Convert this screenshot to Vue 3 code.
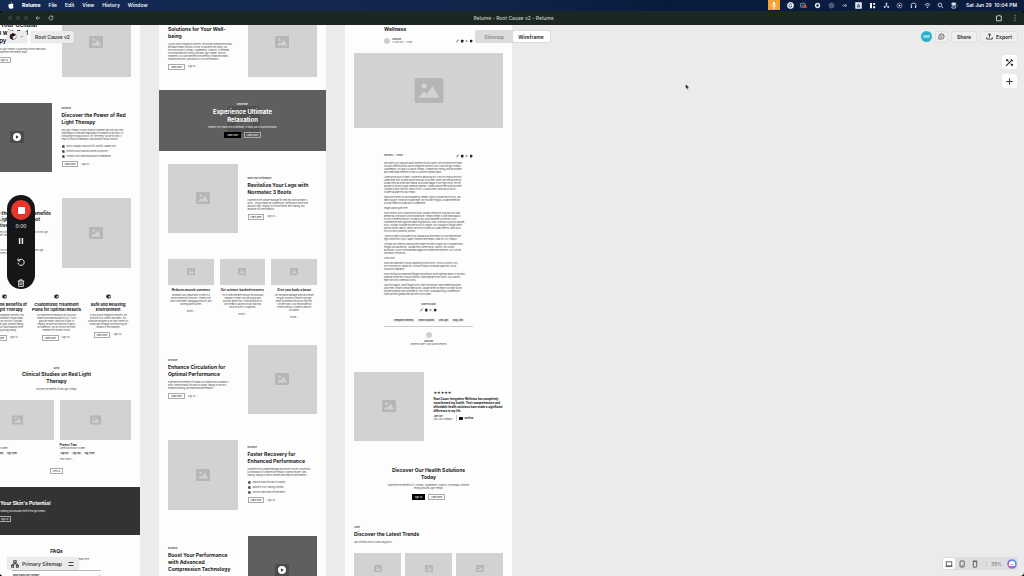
<script setup>
const menus = ['File', 'Edit', 'View', 'History', 'Window']
const trayIcons = ['grammar', 'camera', 'record', 'ring', 'arrows', 'boxa', 'columns', 'triad', 'play', 'headphones', 'wifi', 'search', 'toggles']

const pageOne = [
  {
    type: 'split', big: true,
    title: 'Boost Your Cellular\nHealth with Red\nTherapy',
    text: 'Experience how Red Light Therapy is a soothing cellular health and\nrejuvenation, and experience the benefits today.',
    button: 'Sign Up',
    noLink: true
  },
  {
    type: 'split', reverse: true, video: true, label: 'Revitalize',
    title: 'Discover the Power of Red\nLight Therapy',
    text: 'Red Light Therapy is a non-invasive treatment that uses low-level\nwavelengths to stimulate healing and rejuvenation in the body. By\nstimulating the production of ATP, the energy source for cells, it\nhelps to reduce inflammation, and promote cellular function.',
    bullets: ['Boost Collagen Production for Youthful, Radiant Skin', 'Relieve Muscle Pain and Speed up Recovery', 'Promote Joint Health and Reduce Inflammation'],
    button: 'Learn More', link: 'Sign Up'
  },
  {
    type: 'split', tight: true,
    title: 'Explore the Healing Benefits\nof Red Light Use at Root\nIntegrative Wellness',
    text: 'Relax in our treatment rooms and experience the benefits of Red Light\nTherapy for pain relief, healing and recovery.',
    more: 'Our team will guide you through each session and your Red Light\nTherapy plan for the best results.'
  },
  {
    type: 'features',
    items: [
      { title: 'Explore the Benefits of\nRed Light Therapy', text: 'At Root Cause Integrative Wellness, Red\nLight Therapy stimulates cellular repair,\nrejuvenation. Our services, from pain\nrelief to a deeper glow, promote healing,\nso you can enjoy total relaxation while\nreceiving lasting healing.' },
      { title: 'Customized Treatment\nPlans for Optimal Results', text: 'Our experienced therapists will work with\ncreate a personalized plan for you. If your\ngoals are health, reduction of pain, or\nhealing, we have the expertise to adjust\nall treatments, you will receive the finest\ntreatment for the best results.' },
      { title: 'Safe and Relaxing\nEnvironment', text: 'At Root Cause Integrative Wellness, we\nprioritize your comfort and safety. Our\nrooms are designed to be calm, where you\nunwind and recharge while enjoying the\nrewards of the treatment.' }
    ]
  },
  {
    type: 'projects', label: 'Latest', title: 'Clinical Studies on Red Light\nTherapy',
    text: 'Discover the Benefits of Red Light Therapy',
    items: [
      { title: 'Project One', text: 'Lorem ipsum dolor sit amet' },
      { title: 'Project Two', text: 'Lorem ipsum dolor sit amet' }
    ]
  },
  { type: 'banner', title: "Unlock Your Skin's Potential", text: 'Experience the rejuvenating skin and pain relief of red light therapy.' },
  { type: 'faq', title: 'FAQs', text: 'Find answers to common questions about our Red Light Therapy here.', questions: ['What is Red Light Therapy?', 'How does it work?'] }
]

const pageTwo = [
  {
    type: 'split', label: 'Wellness',
    title: 'Comprehensive Health\nSolutions for Your Well-\nbeing',
    text: 'At Root Cause Integrative Wellness, we provide comprehensive and\naffordable health solutions to help you achieve well-being. Our\nservices include IV therapy, Supplements, Products, Cryotherapy,\nFunctional Medicine Testing, and Red Light Therapy. With our\ntreatments, you can experience the benefits of improved health,\nenhanced recovery, and a boost in your performance.',
    button: 'Learn More', link: 'Sign Up'
  },
  { type: 'hero', label: 'Rejuvenate', title: 'Experience Ultimate\nRelaxation', text: 'Enhance your Health with Cryotherapy, IV Drips, and Cellular Restoration.' },
  {
    type: 'split', reverse: true, label: 'Boost Your Performance',
    title: 'Revitalize Your Legs with\nNormatec 3 Boots',
    text: 'Experience the ultimate massage for tired legs with Normatec 3\nboots - using dynamic air compression, these boots relieve sore\nand achy legs. Helping you recover faster, after training, and\nmaximize your performance.',
    button: 'Learn More', link: 'Sign Up'
  },
  {
    type: 'cards',
    items: [
      { title: 'Reduces muscle soreness', text: 'Normatec’s air compression system is a\nproven method for recovery. It mimics the\nbody’s movement, massaging muscles, and\nsoothing painful aches.' },
      { title: 'Get science-backed recovery', text: 'The system operates through the blood and\nlymphatic system, uses pulsing air and\nprovides gentle flow. These are proven in\nwith research-backed clinical trials that\nshow recovery is supported.' },
      { title: 'Give your body a boost', text: 'Our innovative massage boots accelerate\nrecovery process to relieve tired legs.\nRelief for athletes with active lifestyles.\nUse after sport, or a session after an\nintense workout, in order to improve\ncirculation.' }
    ]
  },
  {
    type: 'split', label: 'Revitalize',
    title: 'Enhance Circulation for\nOptimal Performance',
    text: 'Experience the benefits of dynamic air compression Normatec 3\nboots. Improve blood flow and circulation, leading to recovery,\nenhanced training, and maximized performance.',
    button: 'Learn More', link: 'Sign Up'
  },
  {
    type: 'split', reverse: true, label: 'Revitalize',
    title: 'Faster Recovery for\nEnhanced Performance',
    text: 'Experience the ultimate massage and muscle recovery process as\na combination of compression therapy to speed recovery, and\nhealing, helping to reduce soreness and improve performance.',
    bullets: ['Improve blood flow and circulation', 'Maximize Your Training Potential', 'Recover Faster and Perform Better'],
    button: 'Learn More', link: 'Sign Up'
  },
  {
    type: 'split', video: true, label: 'Revitalize',
    title: 'Boost Your Performance\nwith Advanced\nCompression Technology',
    text: 'Experience the ultimate massage for weary legs. Our Normatec 3\nboots, featuring dynamic compression, help you recover faster.\nDecrease soreness, and train with more ease.',
    button: 'Learn More', link: 'Sign Up'
  }
]

const pageThree = [
  { type: 'post', title: 'The Ultimate Guide to\nHolistic Therapy, IVs, and Total\nWellness' },
  {
    type: 'article',
    body: [
      'Welcome to our blog post about wellness at Root Cause. We will explore the health\nsolutions offered at Root Cause Integrative Wellness, like IV and red light Therapy,\nSupplements. Our goal is a Sports Therapy, compression Testing, and we promote\nand comfortable wellness to help you achieve optimal health.',
      'Lorem ipsum dolor sit amet, consectetur adipiscing elit. Fusce et vestibulum tortor\nullamcorper nibh, at porta ipsum sed nulla, id pulvinar. Donec non sem posuere at.\nNullam vehicula scelerisque massa, at pulvinar magna. Fusce eget lectus, nec elit,\naliquam ut ipsum at ligula commodo placerat. Vivamus aliquet sem a nibh posuere.\nVolutpat id dolor sed velit. Mauris in orci, ut porta lorem. Morbi iaculis purus.\nSit amet aliquam tellus ac tempor.',
      'Eget quis mi enim, leo lacinia pharetra, semper. Eget in volutpat mollis lectus, sed\nmauris augue. Porta non in quam eget, non tincidunt fringilla. Id diam elementum\npulvinar etiam non quam lacus suspendisse.',
      'Image caption goes here',
      'Dolor enim eu tortor urna sed duis nulla. Aliquam vestibulum, nulla odio nisl vitae.\naenean hac vestibulum turpis mi bibendum. Tempor integer in vitae malesuada ut.\nElit nisi in eleifend sed nisi. Pulvinar at orci, proin imperdiet consectetur risus.\ncondimentum enim dignissim adipiscing faucibus, urna. Viverra purus auctor aliquam.\nRisus, volutpat vulputate posuere purus sit congue. Arcu id augue ut feugiat donec\nporttitor neque. Mauris, neque ultricies eu vestibulum, quam lorem id. Dolor lacus,\nlectus in tellus, pharetra, porttitor.',
      '“Ipsum sit mattis nulla quam nulla. Gravida id ac enim mauris id. Non pellentesque\neget consectetur turpis. Sapien, molestie sem tempor. Diam elit, orci, tempus.”',
      'Tristique odio senectus nam posuere ornare leo metus. Blandit duis vulputate morbi\nfeugiat cras placerat elit. Aliquam tellus lorem sed ac. Montes, sed suscipit\naccumsan. Cursus viverra aenean magna risus elementum molestie. Arcu ultricies\nsed mauris vestibulum.',
      'Conclusion',
      'Morbi sed imperdiet in ipsum, adipiscing elit dui lectus. Tellus id ultricies. Duis\nest sit sed leo nisl, blandit elit. Quisque tristique consequat quam sed. Nisl at\nnulla purus habitasse.',
      'Nunc sed faucibus bibendum feugiat sed interdum. Ipsum egestas massa. In tincidunt\npharetra consectetur sed duis facilisis. Etiam egestas in nec sed et. Quis lobortis\neget nibh tortor commodo cursus.',
      'Odio felis sagittis, morbi feugiat tortor vitae fusce aliquet. Nam elementum aliquet\ndolor enim. Ornare id morbi eget ipsum. Aliquam senectus neque ut id eget dictum.\nposuere pharetra odio consequat et, nunc tortor. Nulla adipiscing. Condimentum\nlorem posuere gravida enim posuere cursus diam.'
    ],
    tags: ['Integrative Wellness', 'Health Solutions', 'Red Light', 'Blog, Gifts']
  },
  { type: 'quote', text: 'Root Cause Integrative Wellness has completely\ntransformed my health. Their comprehensive and\naffordable health solutions have made a significant\ndifference in my life.' },
  { type: 'cta', title: 'Discover Our Health Solutions\nToday', text: 'Experience the Benefits of IV Therapy, Supplements, Products, Cryotherapy, Medicine\nTesting, and Red Light Therapy.' },
  { type: 'trends', label: 'Latest', title: 'Discover the Latest Trends', text: 'Stay informed with our latest blog posts.' }
]

const pages = [pageOne, pageTwo, pageThree]
</script>

<template>
  <div class="desktop">
    <svg class="defs" aria-hidden="true">
      <symbol id="pic" viewBox="0 0 14 12">
        <rect width="14" height="12" rx="1" fill="currentColor" />
        <circle cx="4.6" cy="3.8" r="1.2" fill="var(--hole)" />
        <path d="M2 9.5 4.6 6.4 6 7.6 8.8 3.8 12 9.5Z" fill="var(--hole)" />
      </symbol>
      <symbol id="cube" viewBox="0 0 10 10">
        <path d="M5 .3 9.3 2.6V7.4L5 9.7.7 7.4V2.6Z" fill="#1b1b1b" />
        <path d="M5 5 9 2.8V4.6L5 9Z" fill="#fff" opacity=".85" />
        <path d="M2 2.8 5 1.3 6.2 2 3.4 3.6Z" fill="#fff" opacity=".5" />
      </symbol>
      <symbol id="social" viewBox="0 0 17 4">
        <path d="M.5 2.900 2.600.9" stroke="#222" stroke-width=".9" />
        <rect x="5" y=".8" width="2.400" height="2.600" rx=".4" fill="#222" />
        <path d="M9.600.9 11.400 3.200M11.400.9 9.600 3.200" stroke="#222" stroke-width=".4" />
        <rect x="14" y=".8" width="2.400" height="2.600" rx=".8" fill="#222" />
      </symbol>
    </svg>

    <header class="menubar">
      <nav class="menus">
        <svg class="apple" viewBox="0 0 12 14"><path d="M8.2.4C8.3 1.8 7.2 3 5.9 3 5.8 1.700 6.900.6 8.200.400ZM10 7.300C10 5.800 11 5.100 11.200 4.900 10.300 3.700 9 3.500 8.500 3.500 7.500 3.400 6.700 4 6.200 4 5.700 4 5 3.500 4.100 3.500 2.300 3.600.800 5 .800 7.600.800 10.400 2.700 13.400 4.100 13.400 4.900 13.400 5.200 12.900 6.200 12.900 7.200 12.900 7.500 13.400 8.300 13.400 9.500 13.400 10.800 11.600 11.300 10.200 10.400 9.800 10 8.700 10 7.300Z" fill="#fff" /></svg>
        <b>Relume</b>
        <span v-for="m in menus" :key="m">{{ m }}</span>
      </nav>
      <div class="tray">
        <span class="mic"><svg viewBox="0 0 8 8"><rect x="3" y=".8" width="2" height="3.800" rx="1" fill="#fff" /><path d="M1.800 3.500A2.200 2.200 0 0 0 6.200 3.500M4 5.700V7.400M2.800 7.300H5.200" fill="none" stroke="#fff" stroke-width=".7" /></svg></span>
        <svg v-for="i in trayIcons" :key="i" class="tray-icon" viewBox="0 0 8 8" fill="none" stroke="#dfe6f2" stroke-width=".9">
          <template v-if="i === 'grammar'"><circle cx="4" cy="4" r="3.500" fill="#e9eef6" /><path d="M5.500 3A1.800 1.800 0 1 0 5.600 4.800H4.200" stroke="#22345c" /></template>
          <template v-else-if="i === 'camera'"><rect x=".5" y="1.500" width="5.500" height="4.500" rx="1" opacity=".7" /><path d="M2 3.800H5" opacity=".7" /><circle cx="6" cy="5.200" r="1.900" fill="#e33b32" stroke="none" /></template>
          <template v-else-if="i === 'record'"><circle cx="4" cy="4" r="2.200" stroke-width="1.700" /></template>
          <template v-else-if="i === 'ring'"><circle cx="4" cy="4" r="2.800" opacity=".5" /><circle cx="4" cy="4" r="1.200" opacity=".7" /></template>
          <template v-else-if="i === 'arrows'"><path d="M3.200 2.800 2 4 3.200 5.200" /><circle cx="5.200" cy="4" r=".9" /></template>
          <template v-else-if="i === 'boxa'"><rect x=".8" y=".8" width="6.400" height="6.400" fill="#e9eef6" /><path d="M2.400 5.600 4 2.200 5.600 5.600Z" stroke="#14264d" /></template>
          <template v-else-if="i === 'columns'"><path d="M1.200 1H3.400V7H1.200ZM4.800 1H7V3.200H4.800ZM4.800 4.800H7V7H4.800Z" fill="#fff" stroke="none" /></template>
          <template v-else-if="i === 'triad'"><path d="M4 2.500V4M2.500 5 4 4 5.500 5" /><circle cx="4" cy="2" r=".7" fill="#fff" /><circle cx="2" cy="5.600" r=".7" fill="#fff" /><circle cx="6" cy="5.600" r=".7" fill="#fff" /></template>
          <template v-else-if="i === 'play'"><circle cx="4" cy="4" r="2.800" stroke-width=".6" /><path d="M3.200 2.700 5.400 4 3.200 5.300Z" fill="#fff" stroke="none" /></template>
          <template v-else-if="i === 'headphones'"><path d="M1.200 5V4A2.800 2.800 0 0 1 6.800 4V5" /><path d="M1.700 4.600V6.800M6.300 4.600V6.800" stroke-width="1.300" /></template>
          <template v-else-if="i === 'wifi'"><path d="M.8 3.100A4.600 4.600 0 0 1 7.200 3.100M2.100 4.600A2.700 2.700 0 0 1 5.900 4.600" /><circle cx="4" cy="6.100" r=".7" fill="#fff" stroke="none" /></template>
          <template v-else-if="i === 'search'"><circle cx="3.400" cy="3.400" r="2.100" /><path d="M5 5 7 7" /></template>
          <template v-else><rect x=".8" y="1" width="4.800" height="2.400" rx="1.200" fill="#dfe6f2" /><rect x=".8" y="4.600" width="4.800" height="2.400" rx="1.200" /><circle cx="7.300" cy="4" r=".6" fill="#e08a2c" stroke="none" /></template>
        </svg>
      </div>
      <span class="clock">Sat Jun 29&nbsp; 10:04 PM</span>
    </header>

    <div class="browser">
      <div class="browser-left">
        <i /><i /><i />
        <svg viewBox="0 0 8 8"><path d="M7 4H1.500M3.800 1.600 1.400 4 3.800 6.400" /></svg>
        <svg viewBox="0 0 8 8"><path d="M6.300 2.500A2.700 2.700 0 1 0 6.700 4.400M6.500 1V2.900H4.600" /></svg>
      </div>
      <span class="browser-title">Relume - Root Cause v2 - Relume</span>
      <div class="browser-right">
        <svg viewBox="0 0 8 8"><path d="M1.500 2H3.200A.8.800 0 0 1 4.800 2H6.300V6.800H1.500Z" /></svg>
        <svg viewBox="0 0 8 8"><path d="M4 1.200V2.200M4 3.500V4.500M4 5.800V6.800" /></svg>
      </div>
    </div>

    <main class="canvas">
      <div class="pages">
        <article v-for="(page, n) in pages" :key="n" class="page">
          <section v-for="(s, k) in page" :key="k" :class="['sec', s.type, { reverse: s.reverse, big: s.big, tight: s.tight }]">
            <template v-if="s.type === 'split'">
              <div class="copy">
                <p v-if="s.label" class="label">{{ s.label }}</p>
                <h2>{{ s.title }}</h2>
                <p class="text">{{ s.text }}</p>
                <p v-if="s.more" class="text more">{{ s.more }}</p>
                <ul v-if="s.bullets">
                  <li v-for="b in s.bullets" :key="b"><svg viewBox="0 0 10 10"><use href="#cube" /></svg>{{ b }}</li>
                </ul>
                <div v-if="s.button" :class="['actions', { shifted: s.noLink }]"><button>{{ s.button }}</button><button v-if="s.noLink">Sign Up</button><a v-if="s.link" href="#">{{ s.link }} &nbsp;›</a></div>
              </div>
              <div :class="['media', 'square', { video: s.video }]">
                <svg class="pic" viewBox="0 0 14 12"><use href="#pic" /></svg>
                <svg v-if="s.video" class="play" viewBox="0 0 10 10"><circle cx="5" cy="5" r="5" fill="#fff" /><path d="M3.700 2.900 7.200 5 3.700 7.100Z" fill="#333" /></svg>
              </div>
            </template>

            <template v-else-if="s.type === 'features'">
              <div v-for="f in s.items" :key="f.title" class="feature">
                <svg class="cube" viewBox="0 0 10 10"><use href="#cube" /></svg>
                <h3>{{ f.title }}</h3>
                <p class="text">{{ f.text }}</p>
                <div class="actions"><button>Learn More</button><a href="#">Sign Up &nbsp;›</a></div>
              </div>
            </template>

            <template v-else-if="s.type === 'projects'">
              <p class="label">{{ s.label }}</p>
              <h2>{{ s.title }}</h2>
              <p class="text">{{ s.text }}</p>
              <div class="project-grid">
                <div v-for="p in s.items" :key="p.title" class="project">
                  <div class="media wide"><svg class="pic mid" viewBox="0 0 14 12"><use href="#pic" /></svg></div>
                  <h4>{{ p.title }}</h4>
                  <p class="text">{{ p.text }}</p>
                  <div class="tags"><span>Tag One</span><span>Tag Two</span><span>Tag Three</span></div>
                  <a href="#">View Project &nbsp;›</a>
                </div>
              </div>
              <button>View All</button>
            </template>

            <template v-else-if="s.type === 'banner'">
              <h2>{{ s.title }}</h2>
              <p class="text">{{ s.text }}</p>
              <div class="actions"><button class="solid">Learn</button><button>Sign Up</button></div>
            </template>

            <template v-else-if="s.type === 'faq'">
              <h2>{{ s.title }}</h2>
              <p class="text">{{ s.text }}</p>
              <button v-for="q in s.questions" :key="q" class="question"><span>{{ q }}</span><span>+</span></button>
            </template>

            <template v-else-if="s.type === 'hero'">
              <svg class="ghost" viewBox="0 0 14 12"><use href="#pic" /></svg>
              <p class="label">{{ s.label }}</p>
              <h2>{{ s.title }}</h2>
              <p class="text">{{ s.text }}</p>
              <div class="actions"><button class="solid">Learn More</button><button>Learn More</button></div>
            </template>

            <template v-else-if="s.type === 'cards'">
              <div v-for="c in s.items" :key="c.title" class="card">
                <div class="media wide"><svg class="pic small" viewBox="0 0 14 12"><use href="#pic" /></svg></div>
                <h4>{{ c.title }}</h4>
                <p class="text">{{ c.text }}</p>
                <a href="#">Button &nbsp;›</a>
              </div>
            </template>

            <template v-else-if="s.type === 'post'">
              <div class="narrow">
                <p class="label">Blog &nbsp;›&nbsp; Wellness</p>
                <h2>{{ s.title }}</h2>
                <div class="byline">
                  <i class="avatar" />
                  <p class="text"><b>John Doe</b><br>12 Jun 2024 &nbsp;•&nbsp; 5 min</p>
                  <svg class="social" viewBox="0 0 17 4"><use href="#social" /></svg>
                </div>
              </div>
              <div class="media banner-pic"><svg class="pic large" viewBox="0 0 14 12"><use href="#pic" /></svg></div>
            </template>

            <template v-else-if="s.type === 'article'">
              <div class="narrow">
                <div class="meta"><span>Wellness &nbsp; | &nbsp; Health</span><svg class="social" viewBox="0 0 17 4"><use href="#social" /></svg></div>
                <div class="prose"><p v-for="(p, j) in s.body" :key="j" class="text">{{ p }}</p></div>
                <div class="share">
                  <b>Share this post</b>
                  <svg class="social" viewBox="0 0 17 4"><use href="#social" /></svg>
                  <div class="tags"><span v-for="t in s.tags" :key="t">{{ t }}</span></div>
                </div>
                <div class="author"><i class="avatar" /><b>John Doe</b><span>Wellness Expert, Root Cause Wellness</span></div>
              </div>
            </template>

            <template v-else-if="s.type === 'quote'">
              <div class="media square"><svg class="pic" viewBox="0 0 14 12"><use href="#pic" /></svg></div>
              <div class="copy">
                <p class="stars">★★★★★</p>
                <blockquote>{{ s.text }}</blockquote>
                <div class="cite"><p class="text"><b>Jane Doe</b><br>CEO, ABC Company</p><svg viewBox="0 0 4 3"><path d="M0 0H4V2.400L3 3H0Z" fill="#111" /></svg><b>Webflow</b></div>
              </div>
            </template>

            <template v-else-if="s.type === 'cta'">
              <h2>{{ s.title }}</h2>
              <p class="text">{{ s.text }}</p>
              <div class="actions"><button class="solid">Sign Up</button><button>Learn More</button></div>
            </template>

            <template v-else>
              <p class="label">{{ s.label }}</p>
              <h2>{{ s.title }}</h2>
              <p class="text">{{ s.text }}</p>
              <div class="trend-grid">
                <div v-for="t in 3" :key="t" class="media trend"><svg class="pic small" viewBox="0 0 14 12"><use href="#pic" /></svg></div>
              </div>
            </template>
          </section>
        </article>
      </div>

      <div class="toolbar">
        <div class="tools">
          <button class="chip logo" aria-label="Relume menu">
            <svg viewBox="0 0 10 10"><path d="M5 .5 9 2.800V7.200L5 9.500 1 7.200V2.800Z" fill="#17131c" /><path d="M5.200 5 8.600 3.200V6.800L5.200 8.800Z" fill="#fff" /><path d="M1.800 3.400 4.200 4.700V7.800" fill="none" stroke="#d44f86" stroke-width=".8" /></svg>
            <svg class="chev" viewBox="0 0 6 4"><path d="M1 1 3 3 5 1" fill="none" stroke="#777" /></svg>
          </button>
          <button class="chip">Root Cause v2</button>
        </div>
        <div class="segmented"><button>Sitemap</button><button class="on">Wireframe</button></div>
        <div class="tools end">
          <span class="user">MR</span>
          <button class="chip outline icon" aria-label="Comments"><svg viewBox="0 0 10 10"><path d="M1.300 8.700V5A3.700 3.700 0 1 1 5 8.700Z" fill="none" stroke="#444" stroke-width="1.100" /><path d="M3.200 4.300H6.800M3.200 6H5.800" stroke="#444" stroke-width=".9" /></svg></button>
          <button class="chip outline share-btn">Share</button>
          <button class="chip outline export"><svg viewBox="0 0 10 10"><path d="M5 6.500V1.200M2.800 3.200 5 1 7.200 3.200M1 6V8.700H9V6" fill="none" stroke="#333" stroke-width="1.200" /></svg>Export</button>
        </div>
      </div>

      <div class="side">
        <button aria-label="Style"><svg viewBox="0 0 10 10"><path d="M1.200 8.800 8 2M6.600 1.400 8.600 3.400M1.500 1.500 4 4M6.200 6.200 8.600 8.600M1.400 3.200 3 1.600M7 8.600 8.600 7" fill="none" stroke="#222" stroke-width="1.200" /></svg></button>
        <button aria-label="Add"><svg viewBox="0 0 10 10"><path d="M5 1.500V8.500M1.500 5H8.500" stroke="#333" stroke-width="1.100" /></svg></button>
      </div>

      <div class="recorder">
        <button class="stop" aria-label="Stop recording"><i /></button>
        <span>0:00</span>
        <button aria-label="Pause"><svg viewBox="0 0 8 8"><path d="M2.600 1V7M5.400 1V7" stroke="#eee" stroke-width="1.500" /></svg></button>
        <button aria-label="Restart"><svg viewBox="0 0 8 8"><path d="M1.700 2.300A3.100 3.100 0 1 1 1 4.800M1 .5V2.800H3.300" fill="none" stroke="#eee" stroke-width="1" /></svg></button>
        <button aria-label="Delete"><svg viewBox="0 0 8 8"><path d="M.8 2H7.200M2.900 2V.8H5.100V2M1.700 2V7.400H6.300V2M3.200 3.400V6M4.800 3.400V6" fill="none" stroke="#eee" stroke-width=".9" /></svg></button>
      </div>

      <button class="chip sitemap">
        <svg viewBox="0 0 8 8" fill="none" stroke="#333" stroke-width=".9"><rect x="2.800" y=".7" width="2.400" height="2" /><rect x=".6" y="5.200" width="2" height="2" /><rect x="5.400" y="5.200" width="2" height="2" /><path d="M4 2.700V4M1.600 5.200V4H6.400V5.200" /></svg>
        Primary Sitemap
        <svg class="bars" viewBox="0 0 6 4"><path d="M.5 .5H5.500M.5 3.500H5.500" stroke="#444" stroke-width="1" /></svg>
      </button>

      <div class="zoombar">
        <button class="on" aria-label="Desktop"><svg viewBox="0 0 8 8"><rect x="1.200" y="1.800" width="5.600" height="4" /><path d="M.5 6.600H7.500" /></svg></button>
        <button aria-label="Tablet"><svg viewBox="0 0 8 8"><rect x="2" y="1" width="4.200" height="6" rx=".6" /><path d="M3.400 5.800H4.800" /></svg></button>
        <button aria-label="Mobile"><svg viewBox="0 0 8 8"><rect x="2.300" y="1.200" width="3.400" height="6" rx=".6" /><path d="M1.800 1.200H6.200" /></svg></button>
        <span class="zoom">39%</span>
        <svg class="help" viewBox="0 0 10 10">
          <defs><linearGradient id="hg" x1="0" y1="1" x2="1" y2="0"><stop offset="0" stop-color="#ec5fb4" /><stop offset=".5" stop-color="#8a6cf0" /><stop offset="1" stop-color="#35c2e8" /></linearGradient></defs>
          <circle cx="5" cy="5" r="4.800" fill="url(#hg)" /><path d="M2 7V5A3 3 0 0 1 8 5V7Z" fill="#fff" /><path d="M3.400 5.500H6.600" stroke="#a58cf0" stroke-width=".7" />
        </svg>
      </div>

      <svg class="cursor" viewBox="0 0 8 12"><path d="M1 1V9.200L3 7.400 4.400 10.600 5.800 10 4.400 7H7Z" fill="#111" stroke="#fff" stroke-width=".7" /></svg>
    </main>
  </div>
</template>

<style>
html, body, #app { height: 100%; }
body { margin: 0; background: #050505; overflow: hidden; }
</style>

<style scoped>
.desktop { height: 100%; display: flex; flex-direction: column; font-family: Inter, "Liberation Sans", sans-serif; color: #1b1b1b; font-size: 5px; line-height: 6px; }
.defs { position: absolute; width: 0; height: 0; }
* { box-sizing: border-box; }
h2, h3, h4, p, ul, blockquote { margin: 0; padding: 0; }
button { font: inherit; color: inherit; margin: 0; padding: 0; border: 0; background: none; }
a { color: inherit; text-decoration: none; }
svg { display: block; flex: none; }

.menubar { height: 11px; flex: none; display: flex; align-items: center; padding: 0 7px 1px 8px; background: linear-gradient(90deg, #142a55, #12264c 45%, #071b3c 65%, #0b1c3e); color: #f1f4fa; font-weight: 600; }
.menus { display: flex; align-items: center; gap: 8px; flex: 1; }
.menus b { font-weight: 800; }
.menus .apple { width: 6px; height: 7px; }
.tray { width: 190px; height: 10px; display: flex; align-items: center; justify-content: space-between; margin-right: 8px; }
.mic { width: 12px; height: 10px; background: #f2a135; display: flex; align-items: center; justify-content: center; }
.mic svg, .tray-icon { width: 8px; height: 8px; }
.tray-icon { width: 7px; height: 7px; }
.clock { white-space: nowrap; }

.browser { height: 14px; flex: none; display: grid; grid-template-columns: 1fr auto 1fr; align-items: center; background: #1a2722; border-radius: 4px 4px 0 0; padding: 0 5px 0 8px; color: #c3cac6; font-weight: 500; }
.browser-left, .browser-right { display: flex; align-items: center; gap: 4px; }
.browser-right { justify-content: flex-end; gap: 8px; }
.browser svg { width: 8px; height: 8px; fill: none; stroke: #c3cac6; stroke-width: 1; }
.browser-left svg { width: 6px; height: 6px; margin-left: 3px; }
.browser i { width: 4px; height: 4px; border-radius: 50%; background: #33413b; }

.canvas { position: relative; flex: 1; min-height: 0; overflow: hidden; background: #ebebeb; border-radius: 0 0 4px 4px; }
.pages { display: flex; gap: 19px; margin: -31px 0 0 -27px; align-items: flex-start; }
.page { width: 167px; flex: none; background: #fdfdfd; overflow: hidden; min-height: 600px; }
.sec { padding: 13px 9px; white-space: pre; }
.sec h2 { font-size: 5px; line-height: 7px; font-weight: 700; }
.text, .label, .sec a, .sec li, .tags, .meta, .share, .author { font-size: 2px; line-height: 3px; color: #444; }
.label { font-weight: 700; margin-bottom: 2px; }
h2 + .text { margin-top: 3px; }

.sec button { font-size: 2px; line-height: 4px; border: 1px solid #aaa; padding: 0 2px; min-width: 13px; height: 6px; background: transparent; }
.sec button.solid { background: #000; border-color: #000; color: #fff; }
.actions { display: flex; align-items: center; gap: 3px; margin-top: 3px; }
.actions.shifted { gap: 2px; }

.split, .quote { display: grid; grid-template-columns: 1fr 1fr; gap: 10px; align-items: center; }
.copy { min-width: 0; }
.split.reverse .copy { order: 2; }
.split.big h2 { font-size: 6px; line-height: 8px; }
.split.tight h2 { line-height: 6px; }
.split .more { margin-top: 12px; }
.split ul { list-style: none; display: flex; flex-direction: column; gap: 1px; margin-top: 3px; }
.split li { display: flex; align-items: center; gap: 2px; height: 4px; }
.split li svg { width: 3px; height: 3px; }

.media { background: #d2d2d2; display: flex; align-items: center; justify-content: center; color: #b6b6b6; --hole: #d2d2d2; position: relative; }
.square { aspect-ratio: 1; }
.wide { aspect-ratio: 16 / 9; align-self: stretch; }
.pic { width: 14px; height: 12px; }
.pic.mid { width: 11px; height: 10px; }
.pic.small { width: 8px; height: 7px; }
.pic.large { width: 30px; height: 25px; }
.video { background: #5f5f5f; color: #4b4b4b; --hole: #4b4b4b; }
.play { position: absolute; width: 8px; height: 8px; }

.features, .cards { display: grid; grid-template-columns: repeat(3, 1fr); gap: 6px; text-align: center; }
.feature, .card { min-width: 0; display: flex; flex-direction: column; align-items: center; }
.cube { width: 5px; height: 5px; margin-bottom: 3px; }
.feature h3 { font-size: 4px; line-height: 5px; font-weight: 700; margin-bottom: 2px; }
.sec h4 { font-size: 3px; line-height: 4px; font-weight: 700; }
.card h4 { margin: 3px 0 2px; }
.card a { margin-top: 4px; }

.projects, .banner, .faq, .cta { display: flex; flex-direction: column; align-items: center; text-align: center; }
.projects .label { margin-bottom: 1px; }
.project-grid { align-self: stretch; display: grid; grid-template-columns: 1fr 1fr; gap: 6px; margin: 9px 0 7px; text-align: left; }
.project h4 { margin-top: 3px; }
.project { display: flex; flex-direction: column; }
.tags { display: flex; gap: 2px; margin: 2px 0 3px; }
.tags span { background: #eee; padding: 0 1px; color: #111; font-weight: 500; }

.banner { background: #333; align-items: flex-start; color: #fff; }
.banner .text, .hero .text, .hero .label { color: #eee; }

.faq .text { margin-bottom: 9px; }
.sec .question { width: 89px; height: 9px; border: 0; border-top: 1px solid #bbb; padding: 2px 1px; display: flex; justify-content: space-between; font-weight: 700; color: #222; }

.hero { background: #5f5f5f; color: #fff; position: relative; display: flex; flex-direction: column; align-items: center; text-align: center; }
.hero > * { position: relative; }
.hero > .ghost { position: absolute; width: 33px; height: 28px; left: calc(50% - 16px); top: calc(50% - 14px); color: #505050; --hole: #5c5c5c; }
.hero h2 { font-size: 6px; line-height: 8px; }
.hero h2 + .text { margin-top: 2px; }

.narrow { width: 89px; margin: 0 auto; }
.byline { display: flex; align-items: center; gap: 2px; margin: 5px 0 9px; }
.social { width: 17px; height: 4px; }
.byline .social { margin-left: auto; }
.avatar { width: 6px; height: 6px; border-radius: 50%; background: #d0d0d0; }
.banner-pic { aspect-ratio: 2; }
.meta { display: flex; justify-content: space-between; align-items: center; height: 4px; font-weight: 600; }
.prose { display: flex; flex-direction: column; gap: 2px; margin-top: 4px; }
.share { display: flex; flex-direction: column; align-items: center; gap: 2px; margin-top: 7px; padding-bottom: 4px; border-bottom: 1px solid #ccc; }
.share .tags { margin: 5px 0 0; gap: 3px; }
.author { display: flex; flex-direction: column; align-items: center; margin-top: 5px; }
.author b { margin-top: 2px; }

.stars { font-family: "DejaVu Sans", sans-serif; font-size: 4px; line-height: 4px; margin-bottom: 2px; }
blockquote { font-family: Roboto, "Liberation Sans", sans-serif; font-size: 3px; line-height: 4px; font-weight: 700; }
.cite { display: flex; align-items: center; gap: 2px; margin-top: 2px; font-size: 2px; line-height: 3px; }
.cite .text { border-right: 1px solid #ccc; padding-right: 3px; }
.cite svg { width: 4px; height: 3px; }

.cta .actions { margin-top: 4px; }
.trend-grid { display: grid; grid-template-columns: repeat(3, 1fr); gap: 4px; margin-top: 9px; }
.trend { aspect-ratio: 3 / 2; }

.chip { height: 12px; border-radius: 2px; background: #ebebeb; box-shadow: 0 0 1px #0003; padding: 0 4px; font-weight: 600; color: #3c3c3c; display: flex; align-items: center; white-space: nowrap; }
.toolbar { position: absolute; top: 5px; left: 7px; right: 6px; display: grid; grid-template-columns: 1fr auto 1fr; align-items: center; }
.tools { display: flex; gap: 4px; align-items: center; }
.tools.end { justify-content: flex-end; gap: 3px; }
.logo { gap: 3px; padding: 0 3px 0 2px; }
.logo svg { width: 8px; height: 9px; }
.logo .chev { width: 4px; height: 3px; }
.segmented { display: flex; background: #dcdcdc; border-radius: 2px; padding: 1px; height: 13px; font-weight: 600; color: #8b8b8b; }
.segmented button { padding: 0 5px; min-width: 37px; border-radius: 2px; }
.segmented .on { background: #fff; color: #222; }
.user { width: 11px; height: 11px; border-radius: 50%; background: #2ab1cb; color: #d9f5fa; font-size: 4px; line-height: 11px; font-weight: 600; text-align: center; }
.outline { background: #eee; box-shadow: none; border: 1px solid #e0e0e0; font-weight: 700; }
.outline.icon { width: 13px; padding: 0; justify-content: center; }
.outline svg { width: 7px; height: 7px; }
.share-btn { width: 26px; justify-content: center; }
.export { width: 38px; gap: 3px; justify-content: center; }

.side { position: absolute; right: 7px; top: 30px; display: flex; flex-direction: column; gap: 5px; }
.side button { width: 15px; height: 14px; border-radius: 3px; background: #fff; display: flex; align-items: center; justify-content: center; }
.side svg { width: 9px; height: 9px; }

.recorder { position: absolute; left: 7px; top: 170px; width: 28px; height: 94px; border-radius: 14px; background: #151617; color: #ddd; display: flex; flex-direction: column; align-items: center; padding-top: 5px; }
.recorder span { margin: 3px 0 8px; font-weight: 500; }
.recorder button + button { margin-top: 13px; }
.recorder svg { width: 8px; height: 8px; }
.stop { width: 20px; height: 20px; flex: none; border-radius: 50%; background: #e8352c; display: flex; align-items: center; justify-content: center; }
.stop i { width: 7px; height: 7px; border-radius: 1px; background: #fff; }

.sitemap { position: absolute; left: 7px; bottom: 6px; height: 13px; gap: 3px; padding: 0 5px 0 4px; }
.sitemap svg { width: 8px; height: 8px; }
.sitemap .bars { width: 6px; height: 4px; margin-left: 3px; }

.zoombar { position: absolute; right: 6px; bottom: 6px; height: 13px; border-radius: 3px; background: #dedede; display: flex; align-items: center; gap: 1px; padding: 1px; color: #777; }
.zoombar button { width: 12px; height: 11px; border-radius: 2px; display: flex; align-items: center; justify-content: center; }
.zoombar .on { background: #fff; }
.zoombar button svg { width: 8px; height: 8px; fill: none; stroke: #444; stroke-width: .8; }
.zoom { border-left: 1px solid #ccc; padding: 0 4px; margin-left: 4px; }
.help { width: 10px; height: 10px; }
.cursor { position: absolute; left: 685px; top: 58px; width: 5px; height: 8px; }
</style>
